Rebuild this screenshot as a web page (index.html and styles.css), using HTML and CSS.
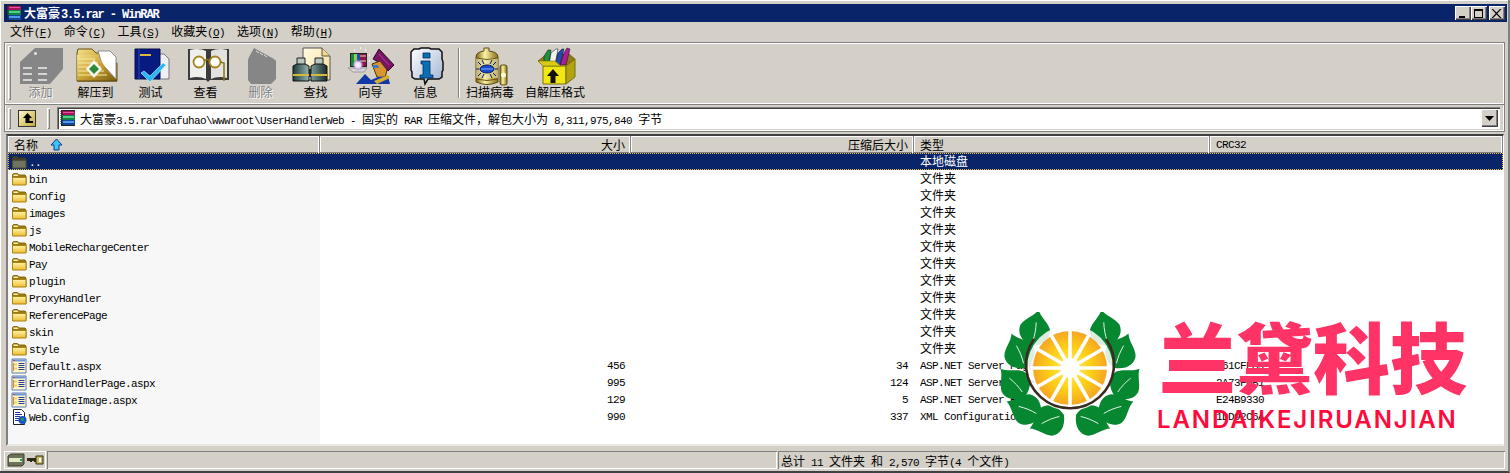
FILE: index.html
```html
<!DOCTYPE html>
<html lang="zh-CN">
<head>
<meta charset="utf-8">
<title>大富豪3.5.rar - WinRAR</title>
<link rel="stylesheet" href="styles.css">
</head>
<body>
<svg class="defs" width="0" height="0" aria-hidden="true">
  <defs>
    <linearGradient id="gold" x1="0" y1="0" x2="1" y2="1"><stop offset="0" stop-color="#f5e08a"/><stop offset=".5" stop-color="#c9a233"/><stop offset="1" stop-color="#7c5c10"/></linearGradient>
    <linearGradient id="goldv" x1="0" y1="0" x2="1" y2="0"><stop offset="0" stop-color="#7d6210"/><stop offset=".4" stop-color="#fbf3a8"/><stop offset="1" stop-color="#8a6b14"/></linearGradient>
    <linearGradient id="fold" x1="0" y1="0" x2="0" y2="1"><stop offset="0" stop-color="#fff3a8"/><stop offset="1" stop-color="#eebc30"/></linearGradient>
    <linearGradient id="steel" x1="0" y1="0" x2="1" y2="0"><stop offset="0" stop-color="#1f3a3a"/><stop offset=".45" stop-color="#8fb0aa"/><stop offset="1" stop-color="#182c2c"/></linearGradient>
    <linearGradient id="pap" x1="0" y1="0" x2="1" y2="1"><stop offset="0" stop-color="#fffbe4"/><stop offset="1" stop-color="#f5dc96"/></linearGradient>
    <linearGradient id="bub" x1="0" y1="0" x2="1" y2="1"><stop offset="0" stop-color="#fff"/><stop offset="1" stop-color="#9db2d0"/></linearGradient>
    <radialGradient id="orange"><stop offset="0" stop-color="#fff27a"/><stop offset=".55" stop-color="#fdd116"/><stop offset="1" stop-color="#f5a623"/></radialGradient>
    <radialGradient id="glow"><stop offset="0" stop-color="#fff"/><stop offset=".5" stop-color="#e8d0ff"/><stop offset="1" stop-color="#7a60c0" stop-opacity="0"/></radialGradient>
    <symbol id="rar" viewBox="0 0 16 16">
      <path d="M1 1h14v4H1z" fill="#a5145f"/><path d="M3 2h11v1H3z" fill="#e64da0"/>
      <path d="M1 5h14v5H1z" fill="#128246"/><path d="M3 6h11v2H3z" fill="#55cf85"/>
      <path d="M1 10h14v5H1z" fill="#12489a"/><path d="M3 11h11v2H3z" fill="#4f9be8"/>
      <path d="M1 1v14M2 2v13" stroke="#111" stroke-dasharray="1 1" fill="none"/>
      <path d="M1 .5h14M1 15.500h14" stroke="#222" fill="none"/>
    </symbol>
    <symbol id="folder" viewBox="0 0 16 16">
      <path d="M1.500 13.500V3.500l1-1h4l1.500 1.500h6l1 1v8.500z" fill="#9a7a12" stroke="#8a6a10"/>
      <path d="M1.500 6.500h13.500v7.500H1.500z" fill="url(#fold)" stroke="#a88410"/>
      <path d="M2.500 3.500h4l1 1.500H2.500z" fill="#fff3a8"/>
    </symbol>
    <symbol id="updir" viewBox="0 0 16 16">
      <path d="M1.500 13.500V3.500l1-1h4l1.500 1.500h6l1 1v8.500z" fill="#3f3d2c" stroke="#3a3828"/>
      <path d="M1.500 6.500h13.500v7.500H1.500z" fill="#6f7460" stroke="#4c4c3a"/>
    </symbol>
    <symbol id="aspx" viewBox="0 0 16 16">
      <path d="M1 1h14v14H1z" fill="#fff6c8" stroke="#5c7fb8"/>
      <path d="M1.500 1.500h13v2h-13z" fill="#6f97d6"/><path d="M2 2h2v1H2z" fill="#e04030"/>
      <path d="M2.500 5v8" stroke="#d98a20"/>
      <path d="M3 5.500h3v2H3zM3 9.500h3v2H3z" fill="#f5c65a"/>
      <path d="M7.500 5.500h6M7.500 7.500h6M7.500 9.500h6M7.500 11.500h6" stroke="#27408f"/>
    </symbol>
    <symbol id="cfg" viewBox="0 0 16 16">
      <path d="M2.500 .5h8l3 3v12h-11z" fill="#fff" stroke="#222"/>
      <path d="M4 3.500h5M4 5.500h7M4 7.500h5M4 9.500h4M4 11.500h4" stroke="#2030a0"/>
      <circle cx="11.500" cy="11" r="4" fill="#1b4fd0"/><path d="M10 8.500l3 1-1 3-2-1zM13 12l2 1-1 1z" fill="#1fa33a"/>
    </symbol>
    <g id="leaf">
      <path d="M0 1C12-2 17-10 15-18 12-25 3-29 0-36-3-29-12-25-15-18-17-10-12-2 0 1Z" fill="#088731"/>
      <path d="M0-4C1-10 1-16 0-23" fill="none" stroke="#fff" stroke-width=".8"/>
    </g>
    <g id="leaves">
      <use href="#leaf" transform="translate(32 33) rotate(10.600)"/>
      <use href="#leaf" transform="translate(25 55) rotate(-22)"/>
      <use href="#leaf" transform="translate(25 83) rotate(-43)"/>
      <use href="#leaf" transform="translate(40 103) rotate(-68)"/>
      <use href="#leaf" transform="translate(63 103) rotate(-112)"/>
    </g>
  </defs>
</svg>
<div class="window">
  <header class="title">
    <svg class="ico16"><use href="#rar"/></svg>
    <span class="title-text"><span class="c">大富豪</span>3.5.rar - WinRAR</span>
    <div class="caps">
      <button class="cap"><svg width="10" height="9" viewBox="0 0 10 9"><path d="M1 7h6v2H1z"/></svg></button>
      <button class="cap"><svg width="10" height="9" viewBox="0 0 10 9"><path d="M0 0h9v9H0zM1 2v6h7V2z" fill-rule="evenodd"/></svg></button>
      <button class="cap cap-x"><svg width="10" height="9" viewBox="0 0 10 9"><path d="M1 0l3.500 3.500L8 0h1.500L5.300 4.500 9.500 9H8L4.500 5.500 1 9H-.5l4.200-4.500L-.5 0z"/></svg></button>
    </div>
  </header>
  <nav class="menu">
    <span class="c m">文件 <span class="l">(<u>F</u>)</span></span>
    <span class="c m">命令 <span class="l">(<u>C</u>)</span></span>
    <span class="c m">工具 <span class="l">(<u>S</u>)</span></span>
    <span class="c m">收藏夹 <span class="l">(<u>O</u>)</span></span>
    <span class="c m">选项 <span class="l">(<u>N</u>)</span></span>
    <span class="c m">帮助 <span class="l">(<u>H</u>)</span></span>
  </nav>
  <section class="toolbar">
    <div class="grip tall"></div>
    <div class="tool off">
      <svg class="tico" viewBox="0 0 48 40"><path d="M3 16 18 2H46V23L33 38H3Z" fill="#868686"/><path d="M18 7h1v1h-1zM6 22h9M21 22h9M6 28h9M21 28h9M6 34h9M21 34h9" stroke="#eee" stroke-width="1.500"/></svg>
      <span class="c">添加</span>
    </div>
    <div class="tool">
      <svg class="tico" viewBox="0 0 48 40"><path d="M5 7 6 3h14l4 4h14v10h7v18H5Z" fill="url(#gold)" stroke="#6b5010"/><path d="M26 5h12l6 6v22L30 18Z" fill="#fff" stroke="#8d8d8d"/><path d="M5 9h20l18 26H5Z" fill="url(#gold)"/><path d="M6 13h17M6 17h20M6 21h23M6 25h26M6 29h29" stroke="#f6e9a2" stroke-width="1"/><path d="M22 14l8 9-8 9-8-9Z" fill="#f8f8f0"/><path d="M22 18l5 5-5 5-5-5Z" fill="#2f8a38"/><path d="M5 35h40" stroke="#5f470c"/></svg>
      <span class="c">解压到</span>
    </div>
    <div class="tool">
      <svg class="tico" viewBox="0 0 48 40"><path d="M30 8h7l5 5v20H30Z" fill="#eef0f5" stroke="#777"/><path d="M8 3h25v30H8Z" fill="#071a80" stroke="#040d4a"/><path d="M12 3v30" stroke="#2946c0"/><path d="M13 9h11" stroke="#d9b83c" stroke-width="2"/><path d="M14 27l3-2 6 5 13-13 3 2-16 17Z" fill="#29b8f0" stroke="#d8f4ff" stroke-width=".6"/></svg>
      <span class="c">测试</span>
    </div>
    <div class="tool">
      <svg class="tico" viewBox="0 0 48 40"><path d="M6 3h41v31H28l-2 2-2-2H6Z" fill="#3c3c3c"/><path d="M8 4c6-2 12-1 16 1v28c-4-2-10-3-16-1Z" fill="#efefec"/><path d="M45 4c-6-2-12-1-16 1v28c4-2 10-3 16-1Z" fill="#e2e2de"/><circle cx="17" cy="16" r="5.500" fill="#fff" stroke="#a3851e" stroke-width="1.800"/><circle cx="33" cy="16" r="5.500" fill="#fff" stroke="#a3851e" stroke-width="1.800"/><path d="M22 15q3-3 6 0M38 16l4 1 0 18" stroke="#8c7018" stroke-width="1.500" fill="none"/></svg>
      <span class="c">查看</span>
    </div>
    <div class="tool off">
      <svg class="tico" viewBox="0 0 48 40"><path d="M12 11 17 2l20 11 2 2v18l-5 5H14l-3-4V14Z" fill="#868686"/><path d="M19 5l3 2M23 7l3 2M27 9l3 2" stroke="#e0e0e0"/></svg>
      <span class="c">删除</span>
    </div>
    <div class="tool">
      <svg class="tico" viewBox="0 0 48 40">
        <path d="M11 2H30L38 10V34H11Z" fill="url(#pap)" stroke="#555"/><path d="M30 2V10H38" fill="#f3d98a" stroke="#555"/>
        <path d="M5 12h8v7H5ZM23 12h8v7h-8Z" fill="#b9c5bd" stroke="#222"/>
        <path d="M1 20 5 18H13L17 20V35H1ZM19 20 23 18H31L35 20V35H19Z" fill="url(#steel)" stroke="#111"/>
        <path d="M1 29h16M19 29h16" stroke="#d8b83a" stroke-width="2"/><path d="M17 23h2v8h-2Z" fill="#222"/>
      </svg>
      <span class="c">查找</span>
    </div>
    <div class="tool">
      <svg class="tico" viewBox="0 0 48 40">
        <path d="M3 7h17v14H3Z" fill="#222"/><path d="M4 8h3v12H4Z" fill="#198a3c"/><path d="M7 8h3v12H7Z" fill="#8fd05a"/><path d="M10 8h3v12h-3Z" fill="#1a4fb0"/><path d="M13 8h6v12h-6Z" fill="#8c1450"/><path d="M13 10h6M13 15h6" stroke="#e8d8a0"/>
        <path d="M1 22h19l-3 4H6Z" fill="#d8d8d8" stroke="#777" stroke-width=".6"/>
        <circle cx="11" cy="19" r="6" fill="url(#glow)"/>
        <path d="M7 4h1M13 2h1M18 4h1M22 9h1M22 15h1" stroke="#fff" stroke-width="1.500"/>
        <path d="M26 13 32 3 47 19 41 25 35 18Z" fill="#7a1468" stroke="#2c0825"/><path d="M32 8 42 19" stroke="#b8458f"/>
        <path d="M25 18 33 15 40 24 38 32 30 31Z" fill="#d9962f" stroke="#55300a"/><path d="M26 19h5l1 3h-6Z" fill="#3c78c8"/>
        <path d="M9 38 18 28 24 34 31 31 41 30 43 38Z" fill="#1238a8"/><path d="M27 35 41 29 43 32 30 38Z" fill="#d3b030"/>
      </svg>
      <span class="c">向导</span>
    </div>
    <div class="tool">
      <svg class="tico" viewBox="0 0 48 40"><g transform="translate(-2 0)"><path d="M11 6l3-3h5l2-1h8l2 1h8l3 3v7l1 3v8l-1 2v5l-3 2H28l-3 5-1-5H15l-3-2v-5l-1-2Z" fill="url(#bub)" stroke="#111" stroke-width="1.500"/><path d="M23 7h7v5h-7zM21 15h9v14h3v3H20v-3h3V18h-2Z" fill="#0c6eb4" stroke="#062f5c" stroke-width=".8"/></g></svg>
      <span class="c">信息</span>
    </div>
    <div class="sep"></div>
    <div class="tool wide-a">
      <svg class="tico" viewBox="0 0 48 40">
        <path d="M10 11Q10 6 18 5V2H23V5Q32 6 32 11V36Q21 41 10 36Z" fill="url(#goldv)" stroke="#5e4a10"/>
        <path d="M10 12H32V32H10Z" fill="#e8e2b0" opacity=".6"/><path d="M10 12Q21 15 32 12M10 33Q21 36 32 33" fill="none" stroke="#6d5412"/>
        <ellipse cx="21" cy="23" rx="7" ry="4" fill="#1c49c8" stroke="#061a60"/><path d="M15 23h12" stroke="#6db0ff"/>
        <path d="M15 19l-3-3M27 19l3-3M13 23H10M29 23h3M15 27l-3 3M27 27l3 3M18 18l-2-4M24 18l2-4M18 28l-2 4M24 28l2 4" stroke="#0a1a60"/>
        <rect x="34" y="19" width="7" height="20" rx="2" fill="url(#goldv)" stroke="#5e4a10"/><circle cx="37.500" cy="29" r="2.500" fill="#fffbd0"/>
      </svg>
      <span class="c">扫描病毒</span>
    </div>
    <div class="tool wide-b">
      <svg class="tico" viewBox="0 0 48 40">
        <path d="M7 15 16 8 38 8 44 13 39 19H12Z" fill="#8f7c12" stroke="#50460a" stroke-width=".6"/>
        <path d="M13 19V10L17 4H20L18 19Z" fill="#1f8f3c" stroke="#111" stroke-width=".5"/>
        <path d="M18 19 20 7 25 3H27L24 19Z" fill="#f2f2f2" stroke="#111" stroke-width=".5"/>
        <path d="M24 19 27 7 31 3H33L29 19Z" fill="#2349b5" stroke="#111" stroke-width=".5"/>
        <path d="M29 19 33 7 36 2 39 3 35 19Z" fill="#a81e96" stroke="#111" stroke-width=".5"/>
        <path d="M12 20H35V38H12Z" fill="#f2e614" stroke="#76700a"/>
        <path d="M35 20 44 13V31L35 38Z" fill="#b3a40f" stroke="#76700a"/>
        <path d="M7 15 12 20H30L24 15Z" fill="#d8cb18" stroke="#76700a" stroke-width=".6"/>
        <path d="M22 23 28 30H24.500V37H19.500V30H16Z" fill="#111"/>
      </svg>
      <span class="c">自解压格式</span>
    </div>
  </section>
  <section class="addr">
    <div class="grip short"></div>
    <button class="up"><svg width="15" height="15" viewBox="0 0 15 15"><path d="M7.500 2 12 7H9.500v3H13v2H5.500V7H3Z" fill="#000"/></svg></button>
    <div class="grip short g2"></div>
    <div class="combo">
      <svg class="ico16"><use href="#rar"/></svg>
      <span class="combo-text"><span class="c">大富豪</span>3.5.rar\Dafuhao\wwwroot\UserHandlerWeb - <span class="c">固实的</span> RAR <span class="c">压缩文件，解包大小为</span> 8,311,975,840 <span class="c">字节</span></span>
      <button class="drop"><svg width="9" height="5" viewBox="0 0 9 5"><path d="M0 0h9L4.500 5Z"/></svg></button>
    </div>
  </section>
  <section class="list">
    <div class="row head">
      <div class="hc name"><span class="c">名称</span><svg class="sort" width="13" height="13" viewBox="0 0 13 13"><path d="M6.500 1 12 7H9v5H4V7H1Z" fill="#39c5f5" stroke="#123a8c"/></svg></div>
      <div class="hc r c">大小</div>
      <div class="hc r c">压缩后大小</div>
      <div class="hc c">类型</div>
      <div class="hc">CRC32</div>
    </div>
    <div class="rows">
      <div class="row sel"><div class="cl name"><svg class="ico16"><use href="#updir"/></svg><span class="nm">..</span></div><div class="cl r"></div><div class="cl r"></div><div class="cl c">本地磁盘</div><div class="cl"></div></div>
      <div class="row"><div class="cl name"><svg class="ico16"><use href="#folder"/></svg><span class="nm">bin</span></div><div class="cl r"></div><div class="cl r"></div><div class="cl c">文件夹</div><div class="cl"></div></div>
      <div class="row"><div class="cl name"><svg class="ico16"><use href="#folder"/></svg><span class="nm">Config</span></div><div class="cl r"></div><div class="cl r"></div><div class="cl c">文件夹</div><div class="cl"></div></div>
      <div class="row"><div class="cl name"><svg class="ico16"><use href="#folder"/></svg><span class="nm">images</span></div><div class="cl r"></div><div class="cl r"></div><div class="cl c">文件夹</div><div class="cl"></div></div>
      <div class="row"><div class="cl name"><svg class="ico16"><use href="#folder"/></svg><span class="nm">js</span></div><div class="cl r"></div><div class="cl r"></div><div class="cl c">文件夹</div><div class="cl"></div></div>
      <div class="row"><div class="cl name"><svg class="ico16"><use href="#folder"/></svg><span class="nm">MobileRechargeCenter</span></div><div class="cl r"></div><div class="cl r"></div><div class="cl c">文件夹</div><div class="cl"></div></div>
      <div class="row"><div class="cl name"><svg class="ico16"><use href="#folder"/></svg><span class="nm">Pay</span></div><div class="cl r"></div><div class="cl r"></div><div class="cl c">文件夹</div><div class="cl"></div></div>
      <div class="row"><div class="cl name"><svg class="ico16"><use href="#folder"/></svg><span class="nm">plugin</span></div><div class="cl r"></div><div class="cl r"></div><div class="cl c">文件夹</div><div class="cl"></div></div>
      <div class="row"><div class="cl name"><svg class="ico16"><use href="#folder"/></svg><span class="nm">ProxyHandler</span></div><div class="cl r"></div><div class="cl r"></div><div class="cl c">文件夹</div><div class="cl"></div></div>
      <div class="row"><div class="cl name"><svg class="ico16"><use href="#folder"/></svg><span class="nm">ReferencePage</span></div><div class="cl r"></div><div class="cl r"></div><div class="cl c">文件夹</div><div class="cl"></div></div>
      <div class="row"><div class="cl name"><svg class="ico16"><use href="#folder"/></svg><span class="nm">skin</span></div><div class="cl r"></div><div class="cl r"></div><div class="cl c">文件夹</div><div class="cl"></div></div>
      <div class="row"><div class="cl name"><svg class="ico16"><use href="#folder"/></svg><span class="nm">style</span></div><div class="cl r"></div><div class="cl r"></div><div class="cl c">文件夹</div><div class="cl"></div></div>
      <div class="row"><div class="cl name"><svg class="ico16"><use href="#aspx"/></svg><span class="nm">Default.aspx</span></div><div class="cl r t">456</div><div class="cl r t">34</div><div class="cl t">ASP.NET Server Page</div><div class="cl t">061CFEA9</div></div>
      <div class="row"><div class="cl name"><svg class="ico16"><use href="#aspx"/></svg><span class="nm">ErrorHandlerPage.aspx</span></div><div class="cl r t">995</div><div class="cl r t">124</div><div class="cl t">ASP.NET Server Page</div><div class="cl t">2A73F0B1</div></div>
      <div class="row"><div class="cl name"><svg class="ico16"><use href="#aspx"/></svg><span class="nm">ValidateImage.aspx</span></div><div class="cl r t">129</div><div class="cl r t">5</div><div class="cl t">ASP.NET Server Page</div><div class="cl t">E24B9330</div></div>
      <div class="row"><div class="cl name"><svg class="ico16"><use href="#cfg"/></svg><span class="nm">Web.config</span></div><div class="cl r t">990</div><div class="cl r t">337</div><div class="cl t">XML Configuration File</div><div class="cl t">1DD92C6A</div></div>
    </div>
  </section>
  <footer class="status">
    <div class="st-icons">
      <svg width="18" height="14" viewBox="0 0 18 14"><path d="M1 3l3-2h13v10l-2 2H1Z" fill="#6b7358" stroke="#3c3f2a"/><path d="M2 5h13v4H2Z" fill="#e6e9c8"/><path d="M13 6h2v2h-2z" fill="#19a05a"/></svg>
      <svg width="17" height="10" viewBox="0 0 17 10"><path d="M0 3h9v4H7V6H5v1H3V6H0Z" fill="#2c2a14"/><path d="M9 1h7v8H9Z" fill="#c9b560" stroke="#2c2a14"/><path d="M12 3h2v4h-2z" fill="#fff"/></svg>
    </div>
    <div class="st-panel grow"></div>
    <div class="st-panel info"><span><span class="c">总计</span> 11 <span class="c">文件夹</span> <span class="c">和</span> 2,570 <span class="c">字节</span>(4 <span class="c">个文件</span>)</span></div>
  </footer>
</div>
<svg class="logo" width="140" height="125" viewBox="0 0 140 125" aria-hidden="true">
  <use href="#leaves"/>
  <use href="#leaves" transform="translate(140 0) scale(-1 1)"/>
  <circle cx="70" cy="56" r="43" fill="#fff" fill-opacity=".85"/>
  <path d="M34 27A44 44 0 1 0 106 27" fill="none" stroke="#3b2a20" stroke-width="2.600"/>
  <circle cx="70" cy="56" r="37" fill="url(#orange)"/>
  <g stroke="#fff" stroke-width="3.600">
    <path d="M70 56V17M70 56V95M70 56H31M70 56H109M70 56 50.500 22.200M70 56 89.500 22.200M70 56 50.500 89.800M70 56 89.500 89.800M70 56 36.200 36.500M70 56 103.800 36.500M70 56 36.200 75.500M70 56 103.800 75.500"/>
  </g>
  <circle cx="70" cy="56" r="10" fill="#fff"/>
</svg>
<div class="brand">兰黛科技</div>
<div class="brand-en">LANDAIKEJIRUANJIAN</div>
</body>
</html>
```

FILE: styles.css
```css
* { box-sizing: border-box; }
html, body { margin: 0; padding: 0; height: 473px; overflow: hidden; background: #d4d0c8; }
body { position: relative; color: #000; font-family: "Liberation Mono", "Noto Sans CJK SC", monospace; font-size: 11px; letter-spacing: -.6px; }
.defs { position: absolute; }
.c { font-family: "Noto Sans CJK SC", sans-serif; font-size: 12px; letter-spacing: 0; font-weight: 400; }
.l { font-family: "Liberation Mono", monospace; font-size: 11px; letter-spacing: -.6px; }
.ico16 { width: 16px; height: 16px; flex: none; display: block; }

.window {
  height: 473px; display: flex; flex-direction: column;
  padding: 4px 1px 1px 4px;
  border-right: 2px solid #808080; border-bottom: 2px solid #404040;
  box-shadow: inset 1px 1px 0 #fff;
}

.title { height: 18px; flex: none; background: #0a246a; color: #fff; display: flex; align-items: center; padding-left: 2px; }
.title-text { margin-left: 2px; font-weight: 700; font-size: 12px; letter-spacing: -1.1px; font-family: "Liberation Mono", monospace; }
.title-text .c { color: #fff; font-weight: 700; margin-right: 1px; }
.caps { margin-left: auto; display: flex; padding-right: 2px; }
.cap { width: 16px; height: 14px; padding: 0; margin: 0; background: #d4d0c8; border: 0; box-shadow: inset 1px 1px 0 #fff, inset -1px -1px 0 #404040, inset -2px -2px 0 #808080; display: flex; align-items: center; justify-content: center; }
.cap svg { display: block; }
.cap-x { margin-left: 2px; }

.menu { height: 20px; flex: none; display: flex; align-items: center; gap: 12px; padding: 0 0 3px 6px; }
.m { white-space: pre; word-spacing: -3px; }

.toolbar {
  height: 63px; flex: none; margin-right: 2px; display: flex; align-items: stretch;
  border: 1px solid #808080;
  box-shadow: inset 1px 1px 0 #fff, inset -1px -1px 0 #fff;
  padding-left: 3px; padding-top: 3px;
}
.grip { width: 3px; flex: none; background: #d4d0c8; box-shadow: inset 1px 1px 0 #fff, inset -1px -1px 0 #808080; }
.grip.tall { height: 54px; margin-right: 2px; }
.tool { width: 55px; flex: none; display: flex; flex-direction: column; align-items: center; line-height: 16px; }
.tico { width: 48px; height: 40px; display: block; margin-bottom: -2px; flex: none; }
.tool.off .c { color: #808080; text-shadow: 1px 1px 0 #fff; }
.sep { width: 2px; height: 50px; flex: none; margin: 2px 0 0 5px; background: #808080; border-right: 1px solid #fff; }
.wide-a { width: 60px; }
.wide-b { width: 70px; }

.addr {
  height: 27px; flex: none; margin-right: 2px; display: flex; align-items: center;
  border: 1px solid #808080; border-top: 0;
  box-shadow: inset 1px 0 0 #fff, inset -1px -1px 0 #fff;
  padding-left: 3px;
}
.grip.short { height: 21px; }
.up { width: 18px; height: 17px; margin: 0 11px 0 7px; padding: 0; border: 1px solid #333; background: linear-gradient(135deg, #fff8c8, #bfa93e); display: flex; align-items: center; justify-content: center; }
.up svg { display: block; }
.g2 { margin-right: 7px; }
.combo { flex: 1; height: 22px; margin-right: 4px; background: #fff; display: flex; align-items: center; padding-left: 3px; box-shadow: inset 1px 1px 0 #808080, inset 2px 2px 0 #404040, inset -1px -1px 0 #fff; }
.combo-text { margin-left: 4px; white-space: pre; flex: 1; }
.drop { width: 17px; height: 18px; margin-right: 2px; padding: 0; background: #d4d0c8; border: 0; box-shadow: inset 1px 1px 0 #fff, inset -1px -1px 0 #404040, inset -2px -2px 0 #808080; display: flex; align-items: center; justify-content: center; }
.drop svg { display: block; }

.list {
  flex: none; height: 312px; margin: 2px 3px 0 2px; background: #fff;
  display: flex; flex-direction: column; overflow: hidden;
  border-top: 2px solid #404040; border-left: 2px solid #808080; border-right: 1px solid #fff; border-bottom: 2px solid #e8e8e4;
}
.row { display: grid; grid-template-columns: 312px 311px 283px 296px 1fr; height: 17px; align-items: center; white-space: pre; }
.head { flex: none; height: 17px; background: #d4d0c8; }
.hc { height: 17px; display: flex; align-items: center; padding-left: 6px; box-shadow: inset -1px 0 0 #808080, inset -2px 0 0 #fff, inset 0 -1px 0 #808080, inset 1px 1px 0 #fff; }
.hc.r { justify-content: flex-end; padding-right: 6px; }
.hc.name { gap: 12px; }
.sort { display: block; }
.rows { flex: 1; background: linear-gradient(#f7f7f7, #f7f7f7) 0 0 / 312px 100% no-repeat, #fff; }
.cl { height: 17px; display: flex; align-items: center; padding-left: 6px; overflow: hidden; }
.cl.r { justify-content: flex-end; padding-right: 6px; }
.cl.c { padding-bottom: 2px; }
.cl.t { padding-top: 1px; }
.cl.name { padding-left: 3px; gap: 2px; padding-top: 1px; }
.nm { padding-top: 1px; }
.sel { background: #0a246a; color: #fff; outline: 1px dotted #f0c040; outline-offset: -1px; }

.status { flex: 1; display: flex; gap: 1px; padding-top: 5px; margin-right: 2px; }
.status > * { height: 18px; }
.st-icons { width: 42px; display: flex; align-items: center; gap: 2px; padding-left: 3px; box-shadow: inset -1px -1px 0 #fff, inset 1px 1px 0 #fff; }
.st-icons svg { display: block; flex: none; }
.st-panel { box-shadow: inset 1px 1px 0 #808080, inset -1px -1px 0 #fff; display: flex; align-items: center; padding-left: 3px; white-space: pre; }
.grow { width: 730px; }
.info { flex: 1; }

.logo { position: absolute; left: 1000px; top: 312px; }
.brand { position: absolute; left: 1159px; top: 305px; font: 900 77px/100px "Noto Sans CJK SC", sans-serif; letter-spacing: 0; color: #ff3366; white-space: nowrap; }
.brand-en { position: absolute; left: 1157px; top: 406px; font: 600 24px/28px "Inter", sans-serif; letter-spacing: 1.900px; color: #ff0a3c; white-space: nowrap; }
```
